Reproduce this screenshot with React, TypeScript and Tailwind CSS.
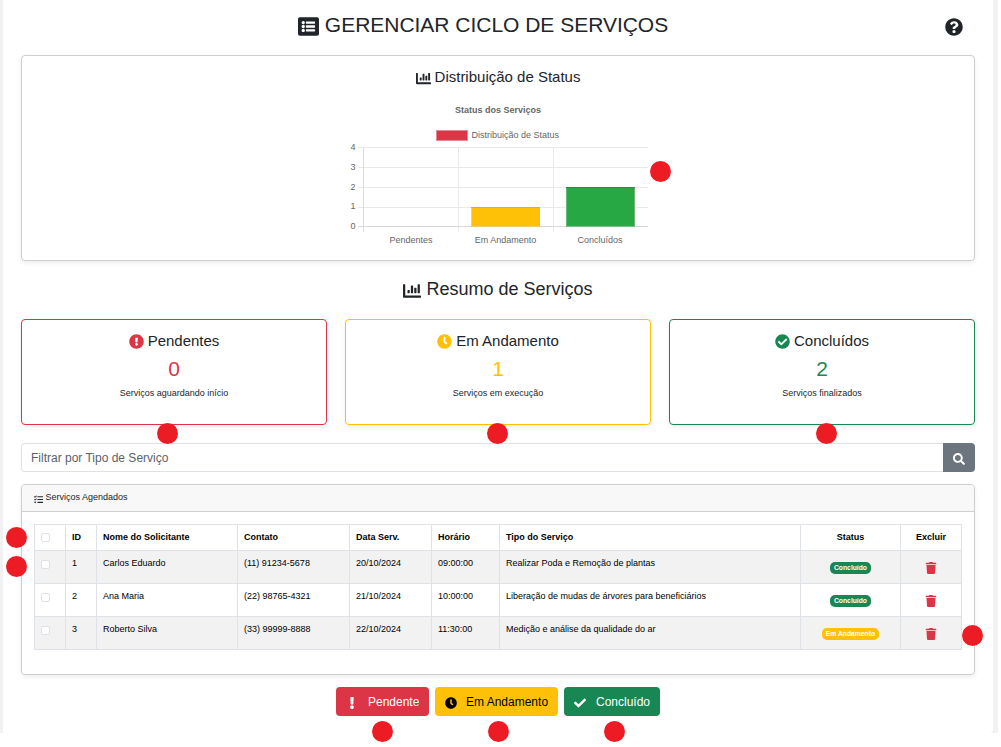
import React from "react";
import {
  FaChartBar,
  FaCheck,
  FaCheckCircle,
  FaClock,
  FaExclamation,
  FaExclamationCircle,
  FaListAlt,
  FaQuestionCircle,
  FaSearch,
  FaTasks,
  FaTrash,
} from "react-icons/fa";

const services = [
  { id: 1, name: "Carlos Eduardo", phone: "(11) 91234-5678", date: "20/10/2024", time: "09:00:00", type: "Realizar Poda e Remoção de plantas", done: true },
  { id: 2, name: "Ana Maria", phone: "(22) 98765-4321", date: "21/10/2024", time: "10:00:00", type: "Liberação de mudas de árvores para beneficiários", done: true },
  { id: 3, name: "Roberto Silva", phone: "(33) 99999-8888", date: "22/10/2024", time: "11:30:00", type: "Medição e análise da qualidade do ar", done: false },
];

const summary = [
  { title: "Pendentes", value: 0, text: "Serviços aguardando início", border: "border-[#dc3545]", color: "text-[#dc3545]", Icon: FaExclamationCircle },
  { title: "Em Andamento", value: 1, text: "Serviços em execução", border: "border-[#ffc107]", color: "text-[#ffc107]", Icon: FaClock },
  { title: "Concluídos", value: 2, text: "Serviços finalizados", border: "border-[#198754]", color: "text-[#198754]", Icon: FaCheckCircle },
];

const markers = [
  "left-[650px] top-[161px]",
  "left-[157px] top-[423px]",
  "left-[487px] top-[423px]",
  "left-[816px] top-[423px]",
  "left-[6px] top-[527px]",
  "left-[6px] top-[556px]",
  "left-[962px] top-[625px]",
  "left-[372px] top-[721px]",
  "left-[488px] top-[721px]",
  "left-[604px] top-[721px]",
];

function StatusChart() {
  return (
    <svg width="320" height="150" viewBox="338 98 320 150" className="block" fontSize="9" fill="#666">
      <text x="498" y="113" textAnchor="middle" fontWeight="bold">Status dos Serviços</text>
      <rect x="436.5" y="130.5" width="31" height="10" fill="#dc3545" stroke="#e58a93" strokeWidth="1" />
      <text x="471.5" y="138">Distribuição de Status</text>
      <g shapeRendering="crispEdges">
        {[147, 167, 187, 207].map((y) => (
          <rect key={y} x="358" y={y} width="290" height="1" fill="#e9e9e9" />
        ))}
        {[458, 553].map((x) => (
          <rect key={x} x={x} y="147" width="1" height="85" fill="#e9e9e9" />
        ))}
        <rect x="363" y="147" width="1" height="85" fill="#dcdcdc" />
        <rect x="358" y="226" width="290" height="1" fill="#d8d8d8" />
      </g>
      <rect x="471" y="207" width="69" height="19.5" fill="#ffc107" />
      <path d="M471.5 226.5V207.5H540" fill="none" stroke="#e5af12" />
      <path d="M471.5 226.5V208" fill="none" stroke="#ffd24d" />
      <rect x="566" y="187" width="69" height="39.5" fill="#28a745" />
      <path d="M566 187.5H635" fill="none" stroke="#24903c" />
      <path d="M566.5 226.5V188M634.5 226.5V188" fill="none" stroke="#69b97b" />
      {[4, 3, 2, 1, 0].map((n, i) => (
        <text key={n} x="355.5" y={150 + i * 19.8} textAnchor="end">{n}</text>
      ))}
      <text x="411" y="243" textAnchor="middle">Pendentes</text>
      <text x="505.5" y="243" textAnchor="middle">Em Andamento</text>
      <text x="600" y="243" textAnchor="middle">Concluídos</text>
    </svg>
  );
}

function Checkbox() {
  return <span className="mx-auto block size-[9px] rounded-[2px] border border-[#dee2e6] bg-white" />;
}

const cell = "border border-[#dee2e6] px-1.5 align-top pt-[5px] leading-[14px]";
const th = `${cell} text-left font-bold`;
const thCenter = `${cell} text-center font-bold`;

export default function App() {
  return (
    <div className="relative h-[747px] w-[1001px] overflow-hidden bg-white font-['Liberation_Sans',Arial,sans-serif] text-[9px] text-[#212529]">
      <div className="h-[733px] w-[998px] bg-[#f2f2f2] pr-[5px] pl-[3px]">
        <main className="h-full rounded-br bg-white px-[18px]">
          <header className="flex h-[55px] items-start pt-[11px]">
            <h1 className="flex flex-1 items-center justify-center text-[21px] leading-7">
              <FaListAlt className="mt-[2px] mr-[6px] size-[21px]" />
              <span className="tracking-[-0.02px]">GERENCIAR CICLO DE SERVIÇOS</span>
            </h1>
            <FaQuestionCircle className="mt-[7px] mr-[12px] size-[18px]" />
          </header>

          <section className="flex h-[206px] w-[954px] flex-col items-center rounded border border-[#cfcfcf] pt-3 shadow-[0_2px_4px_rgba(0,0,0,0.075)]">
            <h2 className="flex h-[18px] items-center text-[15px]">
              <FaChartBar className="mt-[2px] mr-1 size-[15px]" />
              Distribuição de Status
            </h2>
            <div className="mt-3">
              <StatusChart />
            </div>
          </section>

          <h2 className="mt-[18px] flex h-[20px] items-center justify-center text-[18px]">
            <FaChartBar className="mt-[3px] mr-[5px] size-[18px]" />
            Resumo de Serviços
          </h2>

          <section className="mt-5 grid grid-cols-3 gap-[18px]">
            {summary.map(({ title, value, text, border, color, Icon }) => (
              <div key={title} className={`flex h-[106px] flex-col items-center rounded border pt-3 shadow-[0_2px_4px_rgba(0,0,0,0.075)] ${border}`}>
                <h3 className="flex h-[18px] items-center text-[15px]">
                  <Icon className={`mt-[1px] mr-1 size-[15px] ${color}`} />
                  {title}
                </h3>
                <p className={`mt-[6px] text-[21px] leading-[25px] ${color}`}>{value}</p>
                <p className="mt-[5px] leading-[14px]">{text}</p>
              </div>
            ))}
          </section>

          <div className="mt-[18px] flex h-[29px]">
            <div className="flex flex-1 items-center rounded-l border border-r-0 border-[#dee2e6] pl-[9px] text-[12px] text-[#5c6268]">
              Filtrar por Tipo de Serviço
            </div>
            <button className="flex w-8 items-center justify-center rounded-r bg-[#6c757d] pt-[2px] text-white">
              <FaSearch className="size-3" />
            </button>
          </div>

          <section className="mt-3 h-[191px] rounded border border-[#cfcfcf] shadow-[0_2px_4px_rgba(0,0,0,0.075)]">
            <div className="flex h-[27px] items-center rounded-t border-b border-[#cfcfcf] bg-[#f8f8f8] pl-3">
              <FaTasks className="mt-[2px] mr-[2.5px] size-[9px]" />
              Serviços Agendados
            </div>
            <div className="px-3 pt-3">
              <table className="w-[928px] table-fixed border-collapse text-black">
                <colgroup>
                  <col className="w-[31px]" />
                  <col className="w-[31px]" />
                  <col className="w-[141px]" />
                  <col className="w-[112px]" />
                  <col className="w-[82px]" />
                  <col className="w-[68px]" />
                  <col className="w-[301px]" />
                  <col className="w-[100px]" />
                  <col className="w-[61px]" />
                </colgroup>
                <thead>
                  <tr className="h-[26px]">
                    <th className="border border-[#dee2e6] pr-[9px] align-middle"><Checkbox /></th>
                    <th className={th}>ID</th>
                    <th className={th}>Nome do Solicitante</th>
                    <th className={th}>Contato</th>
                    <th className={th}>Data Serv.</th>
                    <th className={th}>Horário</th>
                    <th className={th}>Tipo do Serviço</th>
                    <th className={thCenter}>Status</th>
                    <th className={thCenter}>Excluir</th>
                  </tr>
                </thead>
                <tbody>
                  {services.map((s) => (
                    <tr key={s.id} className="h-[33px] odd:bg-[#f2f2f2]">
                      <td className="border border-[#dee2e6] pt-[9px] pr-[9px] align-top"><Checkbox /></td>
                      <td className={cell}>{s.id}</td>
                      <td className={cell}>{s.name}</td>
                      <td className={cell}>{s.phone}</td>
                      <td className={cell}>{s.date}</td>
                      <td className={cell}>{s.time}</td>
                      <td className={cell}>{s.type}</td>
                      <td className="border border-[#dee2e6] pt-[1px] align-middle">
                        <span className={`mx-auto flex h-3 w-fit items-center rounded-[5px] px-1 pt-[1px] text-[6.75px] leading-none font-bold text-white ${s.done ? "bg-[#198754]" : "bg-[#ffc107]"}`}>
                          {s.done ? "Concluído" : "Em Andamento"}
                        </span>
                      </td>
                      <td className="border border-[#dee2e6] pt-[2px] align-middle">
                        <FaTrash className="mx-auto size-3 text-[#dc3545]" />
                      </td>
                    </tr>
                  ))}
                </tbody>
              </table>
            </div>
          </section>

          <div className="mt-3 flex h-[29px] justify-center gap-[6px] text-[12px]">
            <button className="flex w-[93px] items-center rounded bg-[#dc3545] pl-[10px] text-white">
              <FaExclamation className="mt-[3px] mr-[10px] size-3" />
              Pendente
            </button>
            <button className="flex w-[123px] items-center rounded bg-[#ffc107] pl-[10px] text-black">
              <FaClock className="mt-[3px] mr-[9px] size-3" />
              Em Andamento
            </button>
            <button className="flex w-[96px] items-center rounded bg-[#198754] pl-[10px] text-white">
              <FaCheck className="mt-[3px] mr-[10px] size-3" />
              Concluído
            </button>
          </div>
        </main>
      </div>

      {markers.map((position) => (
        <span key={position} className={`absolute size-[21px] rounded-full bg-[#ed1c24] ${position}`} />
      ))}
    </div>
  );
}
